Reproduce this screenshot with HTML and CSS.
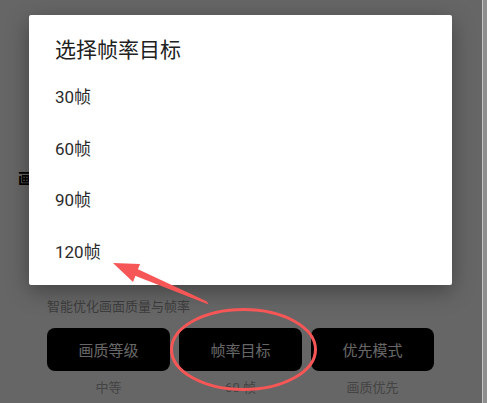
FILE: index.html
```html
<!DOCTYPE html>
<html lang="zh-CN">
<head>
<meta charset="utf-8">
<title>选择帧率目标</title>
<link rel="stylesheet" href="styles.css">
</head>
<body>
<div class="screen">
  <main class="page">
    <h2 class="section-title">画质设置</h2>
    <div class="section">
      <p class="hint">智能优化画面质量与帧率</p>
      <div class="btn-row">
        <button class="opt-btn">画质等级</button>
        <button class="opt-btn">帧率目标</button>
        <button class="opt-btn">优先模式</button>
      </div>
      <div class="value-row">
        <span class="value">中等</span>
        <span class="value">60 帧</span>
        <span class="value">画质优先</span>
      </div>
    </div>
    <div class="overlay"></div>
    <div class="dialog">
      <h1 class="dialog-title">选择帧率目标</h1>
      <ul class="choices">
        <li class="choice">30帧</li>
        <li class="choice">60帧</li>
        <li class="choice">90帧</li>
        <li class="choice">120帧</li>
      </ul>
    </div>
    <svg class="annot" width="482" height="403" viewBox="0 0 482 403">
      <polygon points="207,301.5 208.5,304.5 128,273 131,266" fill="#f65656"/>
      <polygon points="113,263 140,264 133,282" fill="#f65656"/>
      <ellipse cx="243.5" cy="349.5" rx="72" ry="40" fill="none" stroke="#f65656" stroke-width="3"/>
    </svg>
  </main>
  <div class="scrollbar"></div>
</div>
</body>
</html>
```

FILE: styles.css
```css
html, body {
  margin: 0;
  padding: 0;
}
body {
  width: 487px;
  height: 403px;
  overflow: hidden;
  font-family: Roboto, "Noto Sans CJK SC", "Noto Sans", sans-serif;
  background: #ffffff;
}
.screen {
  display: flex;
  width: 487px;
  height: 403px;
}
.page {
  position: relative;
  flex: 1;
  height: 403px;
  overflow: hidden;
  background: #ffffff;
  padding-left: 18px;
  box-sizing: border-box;
}
.scrollbar {
  width: 4px;
  border-left: 1px solid #c4c4c4;
  background: #8e8e8e;
}
.section-title {
  margin: 169px 0 0 0;
  font-size: 15px;
  line-height: 20px;
  font-weight: 700;
  color: #000;
}
.section {
  padding-left: 29px;
}
.hint {
  margin: 108px 0 0 0;
  font-size: 13px;
  line-height: 20px;
  color: #9a9a9a;
}
.btn-row {
  display: flex;
  gap: 9px;
  margin-top: 11px;
}
.opt-btn {
  width: 123px;
  height: 43px;
  border: none;
  border-radius: 8px;
  background: #000;
  color: #fff;
  font-family: inherit;
  font-size: 15px;
  padding: 0;
}
.value-row {
  display: flex;
  gap: 9px;
  margin-top: 7px;
}
.value {
  width: 123px;
  text-align: center;
  font-size: 13px;
  line-height: 20px;
  color: #aaaaaa;
}
.overlay {
  position: absolute;
  inset: 0;
  background: rgba(0, 0, 0, 0.6);
}
.dialog {
  position: absolute;
  left: 29px;
  top: 15px;
  width: 423px;
  height: 270px;
  box-sizing: border-box;
  background: #fff;
  border-radius: 2px;
  box-shadow: 0 6px 22px rgba(0, 0, 0, 0.35);
  padding: 21px 26px 0 26px;
}
.dialog-title {
  margin: 0;
  font-size: 21px;
  line-height: 28px;
  font-weight: 400;
  color: #212121;
}
.choices {
  list-style: none;
  margin: 7px 0 0 0;
  padding: 0;
}
.choice {
  height: 51.67px;
  line-height: 52px;
  font-size: 17px;
  color: #2b2b2b;
}
.annot {
  position: absolute;
  left: 0;
  top: 0;
  pointer-events: none;
}
```
